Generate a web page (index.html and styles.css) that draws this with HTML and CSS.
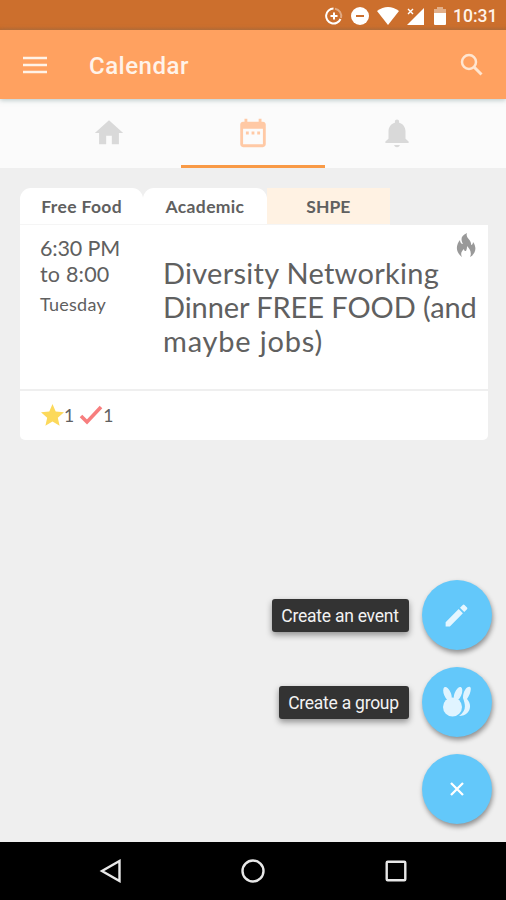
FILE: index.html
```html
<!DOCTYPE html>
<html lang="en">
<head>
<meta charset="utf-8">
<title>Calendar</title>
<link rel="stylesheet" href="styles.css">
</head>
<body>
<div class="screen">
  <div class="status">
    <svg width="18" height="18" viewBox="0 0 18 18" fill="none" stroke="#fff" stroke-width="2"><path d="M8.5 1.5A7.5 7.5 0 1 0 15.5 12"/><path d="M10 1.7A7.5 7.5 0 0 1 16 11" opacity=".4"/><path d="M9 5.5v7M5.5 9h7"/></svg>
    <svg width="18" height="18" viewBox="0 0 18 18"><circle cx="9" cy="9" r="9" fill="#fff"/><path d="M5 9h8" stroke="#cc6f2d" stroke-width="2"/></svg>
    <svg width="22" height="18" viewBox="0 0 22 18"><path fill="#fff" d="M0 4Q11-4 22 4L11 18Z"/></svg>
    <svg width="18" height="18" viewBox="0 0 18 18"><path fill="#fff" d="M17 1v17H0l8.500-8.500Z"/><path d="m1 2 5 5m0-5-5 5" stroke="#fff" stroke-width="1.4"/></svg>
    <svg class="battery" width="12" height="18" viewBox="0 0 12 18"><path fill="#e3af89" d="M3 0h6v2h3v5H0V2h3Z"/><path fill="#fff" d="M0 6h12v11q0 1-1 1H1q-1 0-1-1Z"/></svg>
    <span class="clock">10:31</span>
  </div>
  <header class="appbar">
    <svg width="24" height="18" viewBox="0 0 24 18"><path d="M0 2h24M0 9h24M0 16h24" stroke="#fff3e8" stroke-width="2.4"/></svg>
    <h1>Calendar</h1>
    <svg class="search" width="24" height="24" viewBox="0 0 24 24" fill="none" stroke="#ffe5d0"><circle cx="9" cy="9" r="7" stroke-width="2.5"/><path d="m14 14 7.5 7.5" stroke-width="3"/></svg>
  </header>
  <nav class="tabs">
    <div class="tab"><svg width="34" height="34" viewBox="0 0 24 24" fill="#d9d9d9"><path d="M10 20v-6h4v6h5v-8h3L12 3 2 12h3v8z"/></svg></div>
    <div class="tab active"><svg width="34" height="34" viewBox="0 0 24 24" fill="#ffc9a5"><path d="M9 11H7v2h2zm4 0h-2v2h2zm4 0h-2v2h2zm2-7h-1V2h-2v2H8V2H6v2H5c-1.100 0-2 .9-2 2v14c0 1.100.9 2 2 2h14c1.100 0 2-.9 2-2V6c0-1.100-.9-2-2-2m0 16H5V9h14z"/></svg></div>
    <div class="tab"><svg width="34" height="34" viewBox="0 0 24 24" fill="#d9d9d9"><path d="M12 22c1.100 0 2-.6 2-1.500h-4c0 .9.900 1.500 2 1.500m6-6v-5c0-3.070-1.640-5.640-4.500-6.320V4c0-.83-.67-1.500-1.500-1.500s-1.500.67-1.500 1.500v.68C7.630 5.360 6 7.920 6 11v5l-2.200 2v1h16.400v-1z"/></svg></div>
  </nav>
  <main class="content">
    <div class="tags"><span class="tag">Free Food</span><span class="tag">Academic</span><span class="tag org">SHPE</span></div>
    <article class="card">
      <div class="when"><div class="time">6:30 PM<br><span class="until">to 8:00</span></div><div class="day">Tuesday</div></div>
      <h2><span class="l1">Diversity Networking</span><br><span class="l2">Dinner FREE FOOD (and</span><br><span class="l3">maybe jobs)</span></h2>
      <svg class="flame" width="20" height="24" viewBox="0 0 20 24"><path fill="#999" d="M11 0C4 3 5 7 7 11 5 11 4 9 4 7 0 12-1 19 6 24 4 20 6 18 8 16c0 2 1 2 2 2 1-2 1-4 1-5 3 3 5 7 3 11 6-3 7-10 3-15 0 2-1 3-2 3C16 7 9 5 11 0Z"/></svg>
    </article>
    <div class="votes">
      <svg width="23" height="22" viewBox="0 0 23 22"><path fill="#fcd95b" d="m11.500 0 3.200 7.500 8.300.8-6.200 5.400 1.800 8.100-7.100-4.200-7.100 4.200 1.800-8.100L0 8.300l8.300-.8Z"/></svg>
      <span class="n1">1</span>
      <svg width="24" height="20" viewBox="0 0 24 20"><path d="m2 11 6 6L22 2" fill="none" stroke="#f77e7e" stroke-width="3.600"/></svg>
      <span>1</span>
    </div>
  </main>
  <footer class="navbar">
    <svg width="24" height="24" viewBox="0 0 24 24"><path d="M20.500 2v20L3 12Z"/></svg>
    <svg width="24" height="24" viewBox="0 0 24 24"><circle cx="12" cy="12" r="10.500"/></svg>
    <svg width="24" height="24" viewBox="0 0 24 24"><rect x="2.700" y="2.700" width="18.600" height="18.600" rx="1"/></svg>
  </footer>
  <div class="actions">
    <div class="action"><span class="label event">Create an event</span><div class="fab"><svg width="29" height="29" viewBox="0 0 24 24" fill="#e5f6ff"><path d="M3 17.500V21h3.500L17.300 10.200l-3.500-3.500zM20.700 6.800a1 1 0 0 0 0-1.400l-2.100-2.100a1 1 0 0 0-1.400 0l-2.300 2.300 3.500 3.500z"/></svg></div></div>
    <div class="action"><span class="label group">Create a group</span><div class="fab"><svg width="30" height="32" viewBox="0 0 30 32" fill="#e0f4ff"><ellipse cx="5.500" cy="8" rx="3.500" ry="7.500" transform="rotate(-22 5.500 8)"/><ellipse cx="16" cy="8" rx="3.500" ry="7.500" transform="rotate(22 16 8)"/><circle cx="10.500" cy="21" r="9.500"/><path d="M21 12C21 5 25 0 28 1c2 1 0 8-3 12 6 6 3 17-8 17 7-5 7-10 4-18Z"/></svg></div></div>
    <div class="action"><div class="fab"><svg width="14" height="14" viewBox="0 0 14 14"><path d="m1 1 12 12M13 1 1 13" stroke="#fff" stroke-width="2.300"/></svg></div></div>
  </div>
</div>
</body>
</html>
```
FILE: styles.css
```css
* { box-sizing: border-box; }
body { margin: 0; font-family: Lato, sans-serif; color: #606060; }
svg { display: block; flex: none; }
.screen { position: relative; width: 506px; height: 900px; display: flex; flex-direction: column; overflow: hidden; background: #efefef; }
.status { height: 30px; flex: none; display: flex; align-items: center; justify-content: flex-end; gap: 8px; padding: 1px 9px 0 0; background: linear-gradient(#cc6f2d 26px, #bf6628); }
.status svg { transform: translateX(2px); }
.battery { margin-left: 1px; }
.clock { width: 44px; margin-left: 1px; font: 500 17.500px Roboto, sans-serif; color: #fff3e9; white-space: nowrap; }
.appbar { height: 69px; flex: none; display: flex; align-items: center; padding: 0 22px 0 23px; background: #ffa160; box-shadow: 0 1px 5px #6b8b8b80; z-index: 1; }
.appbar h1 { margin: 2px 0 0 42px; font: 500 24px Roboto, sans-serif; letter-spacing: .5px; color: #fff3e9; }
.search { margin-left: auto; }
.tabs { height: 69px; flex: none; display: flex; padding-left: 37px; background: #fbfbfb; }
.tab { width: 144px; display: flex; justify-content: center; align-items: center; padding-top: 2px; border-bottom: 3px solid transparent; }
.active { border-color: #f99a46; }
.content { flex: 1; padding: 20px 18px 0 20px; }
.tags { display: flex; height: 37px; border-bottom: 1px solid #f5f5f5; width: 370px; }
.tag { flex: 1; display: flex; justify-content: center; align-items: center; background: #fff; border-radius: 11px 11px 0 0; font-size: 17.500px; font-weight: 700; letter-spacing: .35px; }
.org { background: #fff2e3; border-radius: 0; letter-spacing: 0; }
.card { position: relative; display: flex; height: 164px; background: #fff; padding: 11px 8px 0 20px; }
.when { width: 123px; flex: none; }
.time { font-size: 21.500px; line-height: 25.500px; letter-spacing: -.15px; }
.until { letter-spacing: .2px; }
.day { margin-top: 6px; font-size: 18px; line-height: 22px; letter-spacing: .25px; }
.card h2 { margin: 20px 0 0; font-size: 29px; line-height: 34px; font-weight: 400; white-space: nowrap; }
.l1 { letter-spacing: .28px; }
.l2 { letter-spacing: -.08px; }
.l3 { letter-spacing: .8px; }
.flame { position: absolute; right: 12px; top: 8px; }
.votes { display: flex; align-items: center; height: 49px; margin-top: 2px; padding: 0 0 1px 21px; background: #fff; border-radius: 0 0 5px 5px; font-size: 17.500px; }
.n1 { margin-right: 5px; }
.navbar { height: 58px; flex: none; display: flex; justify-content: center; align-items: center; gap: 118.500px; background: #000; }
.navbar path, .navbar circle, .navbar rect { fill: none; stroke: #e8e8e8; stroke-width: 2.400; }
.actions { position: absolute; z-index: 2; right: 14.500px; top: 580px; display: flex; flex-direction: column; align-items: flex-end; gap: 17px; }
.action { display: flex; align-items: center; gap: 13px; }
.fab { width: 70px; height: 70px; border-radius: 50%; display: flex; align-items: center; justify-content: center; background: #63c8fa; box-shadow: 1px 3px 5px #0006; }
.label { height: 33px; padding-top: 2px; border-radius: 3px; display: flex; align-items: center; justify-content: center; background: #333; box-shadow: 0 3px 6px #0006; color: #f2f2f2; font: 17.500px Roboto, sans-serif; letter-spacing: -.25px; white-space: nowrap; }
.event { width: 137px; }
.group { width: 130px; }
```
